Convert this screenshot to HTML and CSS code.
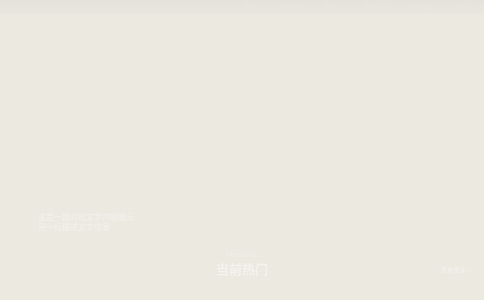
FILE: index.html
```html
<!DOCTYPE html>
<html lang="zh">
<head>
<meta charset="utf-8">
<link rel="stylesheet" href="styles.css">
</head>
<body>
<div class="page">
  <header class="nav">
    <div class="brand"></div>
    <nav class="links">
      <span>首页</span><span>发现音乐</span><span>排行榜</span><span>歌单广场</span><span>我的收藏</span><span>登录</span>
    </nav>
  </header>
  <section class="hero">
    <div class="caption">
      <p>这是一段介绍文字内容展示</p>
      <p>另一行描述文字信息</p>
    </div>
  </section>
  <section class="section-head">
    <div class="title-block">
      <div class="eyebrow">TRENDING</div>
      <h2>当前热门</h2>
    </div>
    <a class="more">查看更多 &gt;</a>
  </section>
</div>
</body>
</html>
```
FILE: styles.css
```css
html, body {
  margin: 0;
  padding: 0;
}
body {
  width: 484px;
  height: 300px;
  overflow: hidden;
  background: #ece9e1;
  font-family: "Noto Sans CJK SC", "Noto Sans", sans-serif;
}
.page {
  display: flex;
  flex-direction: column;
  height: 300px;
}
.nav {
  height: 14px;
  display: flex;
  justify-content: space-between;
  align-items: center;
  padding: 0 16px;
  background: linear-gradient(#e5e2db, #e9e6df);
}
.links {
  display: flex;
  gap: 22px;
  font-size: 6px;
  color: #eae7e1;
}
.hero {
  height: 220px;
  display: flex;
  align-items: flex-end;
  padding: 0 38px;
}
.caption {
  padding-bottom: 2px;
}
.caption p {
  margin: 0;
  font-size: 8px;
  line-height: 10px;
  color: #f4f2ed;
}
.section-head {
  position: relative;
  display: flex;
  justify-content: center;
  padding-top: 18px;
}
.title-block {
  text-align: center;
}
.eyebrow {
  font-size: 5px;
  letter-spacing: 1px;
  color: #f3f1ec;
  line-height: 6px;
}
.title-block h2 {
  margin: 3px 0 0;
  font-size: 13px;
  font-weight: 500;
  line-height: 16px;
  color: #f6f4f0;
}
.more {
  position: absolute;
  right: 14px;
  top: 31px;
  font-size: 6px;
  color: #f3f1ec;
}
```
